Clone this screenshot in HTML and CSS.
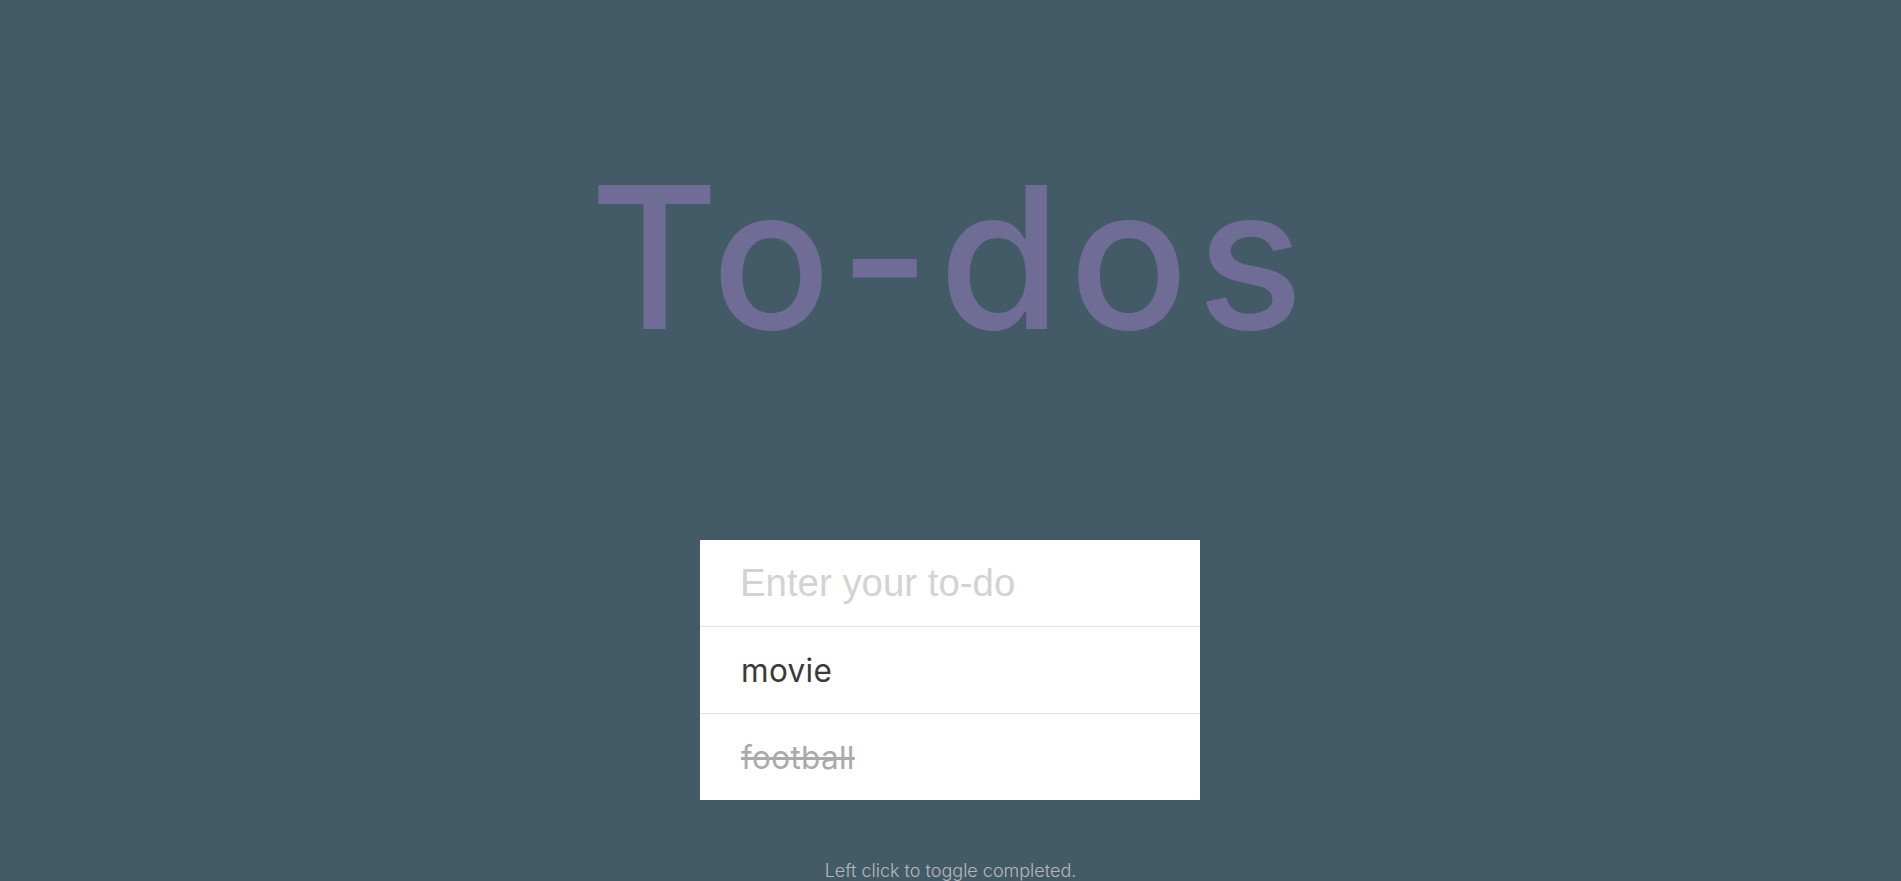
FILE: index.html
```html
<!DOCTYPE html>
<html>
<head>
<meta charset="utf-8">
<link rel="stylesheet" href="styles.css">
</head>
<body>
<main class="app">
  <h1 class="title">To-dos</h1>
  <section class="todo-box">
    <input class="todo-input" type="text" placeholder="Enter your to-do">
    <ul class="todo-list">
      <li class="todo-item">movie</li>
      <li class="todo-item done">football</li>
    </ul>
  </section>
  <p class="hint">Left click to toggle completed.</p>
</main>
</body>
</html>
```
FILE: styles.css
```css
html, body {
  margin: 0;
  padding: 0;
  height: 100%;
}
body {
  background: #435b66;
  font-family: "Inter", "Liberation Sans", sans-serif;
  overflow: hidden;
}
.app {
  display: flex;
  flex-direction: column;
  align-items: center;
}
.title {
  margin: 127px 0 0 0;
  font-family: "Inter", sans-serif;
  font-weight: 500;
  font-size: 198px;
  line-height: 260px;
  color: #6f6c96;
  letter-spacing: 8px;
}
.todo-box {
  margin: 153px 1px 0 0;
  width: 500px;
  background: #fff;
}
.todo-input {
  display: block;
  box-sizing: border-box;
  width: 100%;
  height: 87px;
  border: none;
  border-bottom: 1px solid #e3e3e3;
  padding: 0 40px;
  font-family: "Liberation Sans", Arial, sans-serif;
  font-size: 38.4px;
  color: #333;
  outline: none;
  background: transparent;
}
.todo-input::placeholder {
  color: #d3d3d3;
}
.todo-list {
  list-style: none;
  margin: 0;
  padding: 0;
}
.todo-item {
  box-sizing: border-box;
  height: 87px;
  display: flex;
  align-items: center;
  padding: 0 41px;
  font-size: 31.5px;
  letter-spacing: 0.3px;
  color: #3a3a3a;
  border-bottom: 1px solid #e3e3e3;
}
.todo-item:last-child {
  border-bottom: none;
  height: 86px;
}
.todo-item.done {
  color: #aaaaaa;
  text-decoration: line-through;
}
.hint {
  margin: 60px 0 0 0;
  font-size: 18px;
  font-weight: 300;
  color: #b8b8b8;
}
```
